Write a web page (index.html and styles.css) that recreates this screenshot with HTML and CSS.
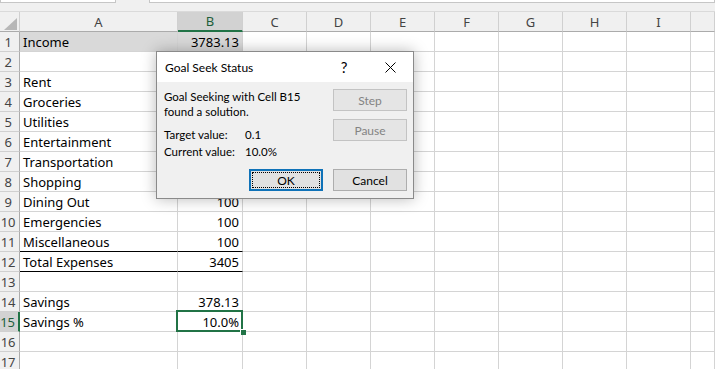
FILE: index.html
```html
<!DOCTYPE html>
<html lang="en">
<head>
  <meta charset="UTF-8">
  <title>Goal Seek Status</title>
  <link rel="stylesheet" href="styles.css">
</head>
<body>
  <div class="excel-window">
    <div class="formula-strip">
      <div class="name-box"></div>
      <div class="formula-box"></div>
    </div>

    <table class="sheet">
      <colgroup>
        <col class="col-rowhead">
        <col class="col-a">
        <col class="col-b">
        <col class="col-std"><col class="col-std"><col class="col-std"><col class="col-std">
        <col class="col-std"><col class="col-std"><col class="col-std">
        <col>
      </colgroup>
      <thead>
        <tr>
          <th class="corner">
            <svg width="13" height="12" viewBox="0 0 13 12"><polygon points="13,0 13,12 0,12" fill="#b7b7b7"/></svg>
          </th>
          <th>A</th>
          <th class="is-selected">B</th>
          <th>C</th><th>D</th><th>E</th><th>F</th><th>G</th><th>H</th><th>I</th><th></th>
        </tr>
      </thead>
      <tbody>
        <tr><th>1</th><td class="fill">Income</td><td class="num fill">3783.13</td><td></td><td></td><td></td><td></td><td></td><td></td><td></td><td></td></tr>
        <tr><th>2</th><td></td><td class="num"></td><td></td><td></td><td></td><td></td><td></td><td></td><td></td><td></td></tr>
        <tr><th>3</th><td>Rent</td><td class="num"></td><td></td><td></td><td></td><td></td><td></td><td></td><td></td><td></td></tr>
        <tr><th>4</th><td>Groceries</td><td class="num"></td><td></td><td></td><td></td><td></td><td></td><td></td><td></td><td></td></tr>
        <tr><th>5</th><td>Utilities</td><td class="num"></td><td></td><td></td><td></td><td></td><td></td><td></td><td></td><td></td></tr>
        <tr><th>6</th><td>Entertainment</td><td class="num"></td><td></td><td></td><td></td><td></td><td></td><td></td><td></td><td></td></tr>
        <tr><th>7</th><td>Transportation</td><td class="num"></td><td></td><td></td><td></td><td></td><td></td><td></td><td></td><td></td></tr>
        <tr><th>8</th><td>Shopping</td><td class="num"></td><td></td><td></td><td></td><td></td><td></td><td></td><td></td><td></td></tr>
        <tr><th>9</th><td>Dining Out</td><td class="num">100</td><td></td><td></td><td></td><td></td><td></td><td></td><td></td><td></td></tr>
        <tr><th>10</th><td>Emergencies</td><td class="num">100</td><td></td><td></td><td></td><td></td><td></td><td></td><td></td><td></td></tr>
        <tr><th>11</th><td class="rule">Miscellaneous</td><td class="num rule">100</td><td></td><td></td><td></td><td></td><td></td><td></td><td></td><td></td></tr>
        <tr><th>12</th><td class="rule">Total Expenses</td><td class="num rule">3405</td><td></td><td></td><td></td><td></td><td></td><td></td><td></td><td></td></tr>
        <tr><th>13</th><td></td><td class="num"></td><td></td><td></td><td></td><td></td><td></td><td></td><td></td><td></td></tr>
        <tr><th>14</th><td>Savings</td><td class="num">378.13</td><td></td><td></td><td></td><td></td><td></td><td></td><td></td><td></td></tr>
        <tr><th class="is-selected">15</th><td>Savings %</td><td class="num active-cell">10.0%</td><td></td><td></td><td></td><td></td><td></td><td></td><td></td><td></td></tr>
        <tr><th>16</th><td></td><td class="num"></td><td></td><td></td><td></td><td></td><td></td><td></td><td></td><td></td></tr>
        <tr><th>17</th><td></td><td class="num"></td><td></td><td></td><td></td><td></td><td></td><td></td><td></td><td></td></tr>
      </tbody>
    </table>

    <div class="goal-dialog">
      <div class="goal-dialog-titlebar">
        <span class="goal-dialog-title">Goal Seek Status</span>
        <span class="goal-dialog-help">?</span>
        <span class="goal-dialog-close">
          <svg width="11" height="11" viewBox="0 0 11 11"><path d="M0.5 0.5 L10.5 10.5 M10.5 0.5 L0.5 10.5" stroke="#000" stroke-width="1" fill="none"/></svg>
        </span>
      </div>
      <div class="goal-dialog-body">
        <div class="goal-dialog-top">
          <div class="goal-dialog-text">
            <p class="goal-dialog-message">Goal Seeking with Cell B15<br>found a solution.</p>
            <div class="goal-dialog-values">
              <span>Target value:</span><span>0.1</span>
              <span>Current value:</span><span>10.0%</span>
            </div>
          </div>
          <div class="goal-dialog-side">
            <button class="goal-dialog-button" type="button" disabled>Step</button>
            <button class="goal-dialog-button" type="button" disabled>Pause</button>
          </div>
        </div>
        <div class="goal-dialog-actions">
          <button class="goal-dialog-button is-default" type="button"><span>OK</span></button>
          <button class="goal-dialog-button" type="button">Cancel</button>
        </div>
      </div>
    </div>
  </div>
</body>
</html>
```

FILE: styles.css
```css
body {
  margin: 0;
  background: #fff;
  font-family: 'Lato', 'Noto Sans', sans-serif;
}
.excel-window {
  position: relative;
  width: 715px;
  height: 369px;
  overflow: hidden;
  background: #fff;
}
.formula-strip {
  display: flex;
  height: 12px;
  background: #f0f0f0;
  box-sizing: border-box;
  border-bottom: 1px solid #dadada;
}
.name-box,
.formula-box {
  height: 2px;
  background: #fff;
  border: 1px solid #c6c6c6;
  border-top: none;
}
.name-box {
  width: 114px;
  margin-right: 33px;
}
.formula-box {
  flex: 1;
}
.sheet {
  width: 715px;
  table-layout: fixed;
  border-collapse: separate;
  border-spacing: 0;
  font-family: 'Noto Sans', sans-serif;
  font-size: 13px;
  color: #000;
}
.col-rowhead { width: 20px; }
.col-a { width: 158px; }
.col-b { width: 65px; }
.col-std { width: 64px; }
.sheet th,
.sheet td {
  box-sizing: border-box;
  padding: 0;
  border-right: 1px solid #d4d4d4;
  border-bottom: 1px solid #d4d4d4;
  white-space: nowrap;
  overflow: visible;
  line-height: 18px;
}
.sheet thead th {
  height: 19px;
  background: #f0f0f0;
  font-weight: normal;
  color: #444;
  border-right-color: #d0d0d0;
  border-bottom-color: #ababab;
  text-align: center;
}
.sheet thead th.corner {
  text-align: right;
  vertical-align: bottom;
  padding: 0 2px 1px 0;
  line-height: 0;
}
.sheet tbody tr {
  height: 20px;
}
.sheet tbody th {
  background: #f0f0f0;
  font-weight: normal;
  color: #444;
  text-align: center;
  padding-right: 3px;
  letter-spacing: -0.3px;
  border-right-color: #ababab;
  border-bottom-color: #d0d0d0;
}
.sheet th.is-selected {
  background: #d2d2d2;
  color: #1f5f3b;
}
.sheet thead th.is-selected {
  border-bottom: 2px solid #217346;
}
.sheet tbody th.is-selected {
  border-right: 2px solid #217346;
}
.sheet td {
  padding: 0 2px 0 3px;
}
.sheet td.num {
  text-align: right;
  padding-right: 3px;
}
.sheet td.fill {
  background: #d9d9d9;
}
.sheet td.rule {
  border-bottom-color: #000;
}
.sheet td.active-cell {
  position: relative;
}
.sheet td.active-cell::after {
  content: '';
  position: absolute;
  left: -2px;
  top: -2px;
  right: -1px;
  bottom: -1px;
  border: 2px solid #217346;
}
.sheet td.active-cell::before {
  content: '';
  position: absolute;
  right: -4px;
  bottom: -4px;
  width: 5px;
  height: 5px;
  background: #217346;
  border: 1px solid #fff;
  border-right: none;
  border-bottom: none;
  z-index: 1;
}

.goal-dialog {
  position: absolute;
  left: 156px;
  top: 51px;
  width: 258px;
  box-sizing: border-box;
  border: 1px solid #8a8a8a;
  background: #f0f0f0;
  box-shadow: 0 0 14px rgba(0,0,0,0.28);
  font-size: 11.5px;
  color: #000;
}
.goal-dialog-titlebar {
  display: flex;
  align-items: center;
  height: 30px;
  background: #fff;
  font-size: 12px;
}
.goal-dialog-title {
  flex: 1;
  padding-left: 8px;
}
.goal-dialog-help,
.goal-dialog-close {
  width: 46px;
  display: flex;
  justify-content: center;
  align-items: center;
  font-size: 15px;
}
.goal-dialog-body {
  padding: 7px 6px 7px 7px;
}
.goal-dialog-top {
  display: flex;
  justify-content: space-between;
  height: 71px;
}
.goal-dialog-message {
  margin: 0 0 7px;
  line-height: 15px;
}
.goal-dialog-values {
  display: grid;
  grid-template-columns: 81px auto;
  line-height: 17px;
}
.goal-dialog-side {
  display: flex;
  flex-direction: column;
  gap: 8px;
}
.goal-dialog-actions {
  display: flex;
  justify-content: flex-end;
  gap: 10px;
  margin-top: 9px;
}
.goal-dialog-button {
  width: 74px;
  height: 22px;
  padding: 0;
  box-sizing: border-box;
  background: #e1e1e1;
  border: 1px solid #adadad;
  font-family: inherit;
  font-size: 12px;
  color: #000;
}
.goal-dialog-button:disabled {
  background: #e5e5e5;
  border-color: #c3c3c3;
  color: #838383;
}
.goal-dialog-button.is-default {
  border: 2px solid #0f72b8;
  padding: 1px;
}
.goal-dialog-button.is-default span {
  display: flex;
  align-items: center;
  justify-content: center;
  height: 100%;
  outline: 1px dotted #000;
  outline-offset: -1px;
}
```
